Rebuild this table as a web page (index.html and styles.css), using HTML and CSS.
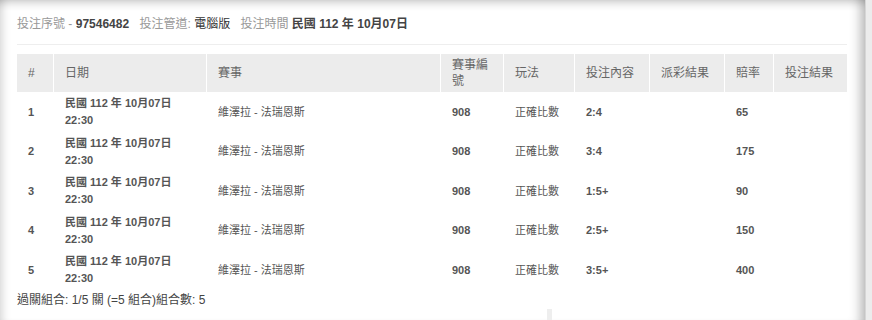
FILE: index.html
```html
<!DOCTYPE html>
<html lang="zh-Hant">
<head>
<meta charset="utf-8">
<title>投注明細</title>
<link rel="stylesheet" href="styles.css">
</head>
<body>
<div class="frame">
  <div class="panel">
    <div class="info">
      <span class="lbl">投注序號</span> <span class="lbl">-</span> <b class="val">97546482</b>
      <span class="gap"></span><span class="lbl">投注管道:</span> <span class="val plain">電腦版</span>
      <span class="gap"></span><span class="lbl">投注時間</span> <b class="val">民國 112 年 10月07日</b>
    </div>
    <table class="bets">
      <colgroup>
        <col class="c-no"><col class="c-date"><col class="c-event"><col class="c-id"><col class="c-play"><col class="c-pick"><col class="c-draw"><col class="c-odds"><col class="c-res">
      </colgroup>
      <thead>
        <tr>
          <th>#</th><th>日期</th><th>賽事</th><th>賽事編號</th><th>玩法</th><th>投注內容</th><th>派彩結果</th><th>賠率</th><th>投注結果</th>
        </tr>
      </thead>
      <tbody>
        <tr><td class="b">1</td><td class="b">民國 112 年 10月07日<br>22:30</td><td>維澤拉 - 法瑞恩斯</td><td class="b">908</td><td>正確比數</td><td class="b">2:4</td><td></td><td class="b">65</td><td></td></tr>
        <tr><td class="b">2</td><td class="b">民國 112 年 10月07日<br>22:30</td><td>維澤拉 - 法瑞恩斯</td><td class="b">908</td><td>正確比數</td><td class="b">3:4</td><td></td><td class="b">175</td><td></td></tr>
        <tr><td class="b">3</td><td class="b">民國 112 年 10月07日<br>22:30</td><td>維澤拉 - 法瑞恩斯</td><td class="b">908</td><td>正確比數</td><td class="b">1:5+</td><td></td><td class="b">90</td><td></td></tr>
        <tr><td class="b">4</td><td class="b">民國 112 年 10月07日<br>22:30</td><td>維澤拉 - 法瑞恩斯</td><td class="b">908</td><td>正確比數</td><td class="b">2:5+</td><td></td><td class="b">150</td><td></td></tr>
        <tr><td class="b">5</td><td class="b">民國 112 年 10月07日<br>22:30</td><td>維澤拉 - 法瑞恩斯</td><td class="b">908</td><td>正確比數</td><td class="b">3:5+</td><td></td><td class="b">400</td><td></td></tr>
      </tbody>
    </table>
    <div class="summary">過關組合: 1/5 關 (=5 組合)組合數: 5</div>
    <div class="tick"></div>
  </div>
  <div class="rail"></div>
</div>
</body>
</html>
```

FILE: styles.css
```css
html, body {
  margin: 0;
  padding: 0;
  background: #fff;
}
body {
  font-family: "Liberation Sans", Arial, "Noto Sans CJK TC", sans-serif;
  color: #555;
  width: 872px;
  height: 320px;
  overflow: hidden;
}
.frame {
  display: flex;
  height: 320px;
}
.panel {
  flex: 1;
  padding: 16px 18px 0 17px;
  box-shadow:
    inset 0 10px 10px -8px rgba(0, 0, 0, 0.24),
    inset 10px 0 10px -8px rgba(0, 0, 0, 0.18),
    inset -14px 0 12px -10px rgba(0, 0, 0, 0.3);
  overflow: hidden;
}
.rail {
  width: 6px;
  background: #ececec;
  border-left: 1px solid #d6d6d6;
}
.info {
  font-size: 12px;
  line-height: 17px;
  padding-bottom: 11px;
  border-bottom: 1px solid #eee;
  white-space: nowrap;
}
.info .lbl {
  color: #999;
}
.info .val {
  color: #444;
  font-weight: bold;
}
.info .val.plain {
  font-weight: normal;
  color: #333;
}
.info .gap {
  display: inline-block;
  width: 7px;
}
.bets {
  margin-top: 9px;
  width: 830px;
  table-layout: fixed;
  border-collapse: separate;
  border-spacing: 0;
}
.c-no { width: 36px; }
.c-date { width: 153px; }
.c-event { width: 234px; }
.c-id { width: 63px; }
.c-play { width: 71px; }
.c-pick { width: 75px; }
.c-draw { width: 75px; }
.c-odds { width: 49px; }
.c-res { width: 74px; }
.bets th {
  background: #ececec;
  color: #666;
  font-weight: normal;
  font-size: 12px;
  line-height: 16px;
  text-align: left;
  padding: 3px 11px 3px 11px;
  height: 34px;
  border-left: 1px solid #fff;
  box-sizing: border-box;
}
.bets th:first-child {
  border-left: 0;
}
.bets td {
  font-size: 11px;
  line-height: 17px;
  padding: 3px 11px 2.5px 11px;
  vertical-align: middle;
  color: #555;
}
.bets td:not(:first-child) {
  border-left: 1px solid transparent;
}
.bets td.b {
  font-weight: bold;
}
.summary {
  margin-top: 2px;
  font-size: 12px;
  line-height: 17px;
  color: #444;
}
.tick {
  width: 5px;
  height: 12px;
  margin: 0 0 0 530px;
  background: #eee;
}
```
